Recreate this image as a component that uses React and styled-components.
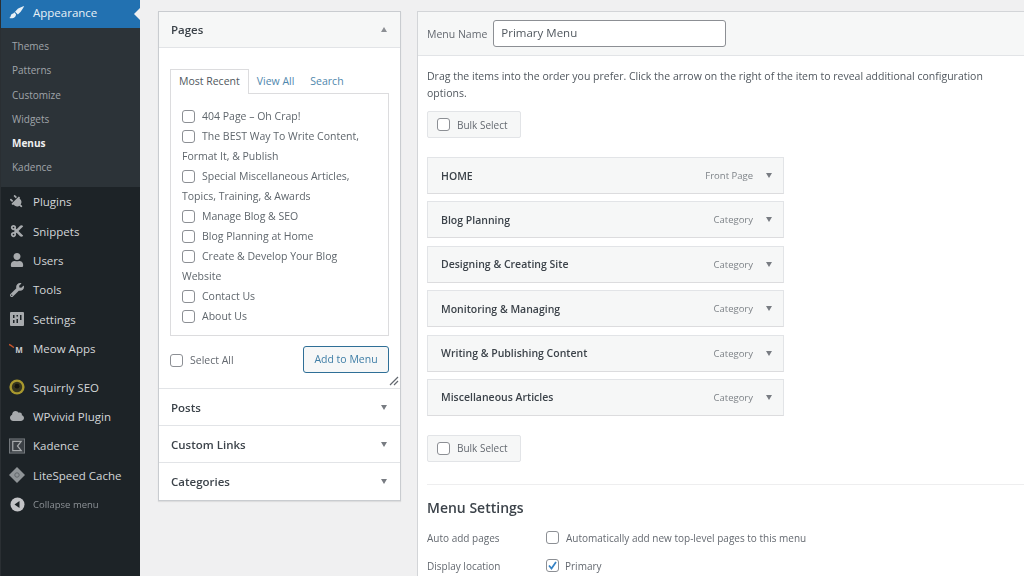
import React from "react";
import styled, { createGlobalStyle } from "styled-components";
import { FaCut, FaPlug, FaUser, FaWrench, FaCloud } from "react-icons/fa";

const GlobalStyle = createGlobalStyle`
  html, body {
    margin: 0;
    height: 576px;
    overflow: hidden;
    background: #f0f0f1;
  }
  * {
    box-sizing: border-box;
  }
  body {
    font-family: "Open Sans", "Noto Sans", sans-serif;
    font-size: 10.5px;
    color: #50575e;
  }
`;

const Page = styled.div`
  display: flex;
  width: 1024px;
  height: 576px;
  overflow: hidden;
  filter: blur(0.35px);
`;

const Sidebar = styled.nav`
  width: 140px;
  flex-shrink: 0;
  background: #1d2327;
  border-left: 1px solid #2a2f33;
`;

const ActiveItem = styled.div`
  position: relative;
  display: flex;
  align-items: center;
  height: 28px;
  padding: 0 0 3px 8px;
  gap: 8px;
  background: #2271b1;
  color: #e8f0f6;
  font-size: 11.5px;
  &::after {
    content: "";
    position: absolute;
    right: 0;
    top: 8px;
    border: 6px solid transparent;
    border-right-color: #f0f0f1;
    border-left-width: 0;
  }
`;

const SubMenu = styled.div`
  height: 159px;
  padding-top: 6px;
  background: #2c3338;
`;

const SubItem = styled.div`
  height: 24.3px;
  line-height: 24.3px;
  padding-left: 11px;
  font-size: 10px;
  color: ${props => (props.$current ? "#f0f0f1" : "#a0a5aa")};
  font-weight: ${props => (props.$current ? 700 : 400)};
`;

const MainItems = styled.div`
  padding-top: 0;
`;

const MainItem = styled.div`
  display: flex;
  align-items: center;
  gap: 8px;
  height: 29.4px;
  margin-top: ${props => props.$gap || 0}px;
  padding-left: 8px;
  color: #d3d6d9;
  font-size: 11.5px;
`;

const CollapseItem = styled(MainItem)`
  color: #8c9196;
  font-size: 9.5px;
`;

const IconSlot = styled.span`
  display: flex;
  align-items: center;
  justify-content: center;
  width: 16px;
  height: 16px;
  flex-shrink: 0;
  color: #a7aaad;
  font-size: 14px;
`;

const Content = styled.main`
  display: flex;
  align-items: flex-start;
  flex: 1;
  gap: 16px;
  padding: 11px 0 0 18px;
  min-width: 0;
`;

const Accordion = styled.section`
  width: 243px;
  flex-shrink: 0;
  background: #fff;
  border: 1px solid #c9ccd0;
  box-shadow: 0 1px 1px rgba(0, 0, 0, 0.08);
`;

const AccordionHead = styled.div`
  display: flex;
  align-items: center;
  justify-content: space-between;
  height: ${props => (props.$open ? 36 : 37)}px;
  padding: 0 13px 0 12px;
  background: ${props => (props.$open ? "#f6f7f7" : "#fff")};
  border-bottom: 1px solid #e2e4e7;
  color: #3c434a;
  font-size: 11.5px;
  font-weight: 600;
  &:last-child {
    border-bottom: 0;
  }
`;

const Arrow = styled.span`
  width: 0;
  height: 0;
  border-left: 3.5px solid transparent;
  border-right: 3.5px solid transparent;
  ${props =>
    props.$up
      ? "border-bottom: 5px solid #8c8f94;"
      : "border-top: 5px solid #787c82;"}
`;

const AccordionBody = styled.div`
  position: relative;
  height: 341px;
  padding: 21px 11px 0 11px;
  border-bottom: 1px solid #e2e4e7;
`;

const Tabs = styled.div`
  display: flex;
  align-items: flex-end;
  height: 24px;
`;

const Tab = styled.span`
  height: ${props => (props.$active ? 25 : 22)}px;
  line-height: ${props => (props.$active ? 22 : 20)}px;
  padding: ${props => (props.$active ? "0 8px" : "0 8px")};
  margin-right: ${props => (props.$active ? 0 : 0)}px;
  font-size: 10.5px;
  color: ${props => (props.$active ? "#50575e" : "#4f87ad")};
  background: #fff;
  position: relative;
  z-index: 1;
  ${props =>
    props.$active &&
    "border: 1px solid #dcdcde; border-bottom: 0; margin-bottom: -1px;"}
`;

const PageList = styled.div`
  height: 243px;
  padding: 12px 11px;
  border: 1px solid #dcdcde;
  line-height: 20px;
  font-size: 10.5px;
`;

const PageEntry = styled.div`
  color: #5f666c;
`;

const Check = styled.span`
  display: inline-flex;
  align-items: center;
  justify-content: center;
  width: 13px;
  height: 13px;
  margin-right: ${props => props.$space || 6}px;
  vertical-align: -3px;
  background: #fff;
  border: 1px solid #8c8f94;
  border-radius: 3px;
`;

const AddRow = styled.div`
  display: flex;
  align-items: center;
  justify-content: space-between;
  margin-top: 10px;
  font-size: 10.5px;
  color: #646970;
`;

const AddButton = styled.span`
  width: 86px;
  height: 27px;
  line-height: 25px;
  text-align: center;
  color: #3f7ea6;
  background: #f6f7f7;
  border: 1px solid #2f6f97;
  border-radius: 3px;
  font-size: 10.5px;
`;

const Resize = styled.svg`
  position: absolute;
  right: 1px;
  bottom: 2px;
`;

const Editor = styled.section`
  flex: 1;
  height: 580px;
  margin-right: -10px;
  background: #fff;
  border: 1px solid #d3d5d8;
`;

const EditorHead = styled.div`
  display: flex;
  align-items: center;
  gap: 6px;
  height: 44px;
  padding-left: 9px;
  background: #f6f7f7;
  border-bottom: 1px solid #e2e4e7;
  font-size: 10.5px;
  color: #646970;
`;

const NameInput = styled.div`
  width: 233px;
  height: 27px;
  line-height: 24px;
  padding-left: 7px;
  background: #fff;
  border: 1px solid #8c8f94;
  border-radius: 3px;
  font-size: 11.5px;
  color: #50575e;
`;

const EditorBody = styled.div`
  padding: 12px 9px 0;
`;

const HelpText = styled.p`
  margin: 0;
  width: 585px;
  line-height: 17px;
  font-size: 10.5px;
  color: #50575e;
`;

const BulkBox = styled.div`
  display: flex;
  align-items: center;
  width: 94px;
  height: 27px;
  margin-top: ${props => props.$top}px;
  padding-left: 9px;
  background: #f6f7f7;
  border: 1px solid #e2e4e7;
  border-radius: 2px;
  color: #646970;
  font-size: 10px;
`;

const MenuRows = styled.div`
  display: flex;
  flex-direction: column;
  gap: 7.4px;
  width: 357px;
  margin-top: 19px;
`;

const MenuRow = styled.div`
  display: flex;
  align-items: center;
  height: 37px;
  padding: 0 11px 0 13px;
  background: #f6f7f7;
  border: 1px solid #e2e4e7;
  border-bottom-color: #dcdcde;
  color: #3c434a;
  font-size: 10.5px;
  font-weight: 600;
`;

const RowType = styled.span`
  margin-left: auto;
  margin-right: 13px;
  color: #7e8388;
  font-size: 9.5px;
  font-weight: 400;
`;

const Divider = styled.hr`
  margin: 22px 0 0;
  border: 0;
  border-top: 1px solid #eeeeef;
`;

const SettingsTitle = styled.h3`
  margin: 13px 0 7px;
  font-size: 14px;
  line-height: 19px;
  font-weight: 600;
  color: #3c434a;
`;

const SettingRow = styled.div`
  display: flex;
  align-items: center;
  height: 28px;
  font-size: 10px;
  color: #646970;
`;

const SettingLabel = styled.span`
  width: 119px;
`;

const PaintIcon = () => (
  <svg width="17" height="17" viewBox="0 0 20 20" fill="#e8f0f6">
    <path d="M19 2c-2 .6-6 2.2-8 3.4L7.500 9l3.600 3.500 3.500-3.500C16.200 7 18.200 4 19 2zM6.700 9.800l-1.400 1.400c-1.500.2-2.500 1-3 2.500-.3 1.300-.8 2.300-1.800 3.100 2.700.6 5.500.2 7.200-1.600.7-.8 1-1.500 1-2.300l.3-.3z" />
  </svg>
);

const SettingsIcon = () => (
  <svg width="14" height="14" viewBox="0 0 14 14">
    <rect width="14" height="14" rx="1" fill="#a7aaad" />
    <path d="M3 3h1.500v3H3zM3 8h1.500v3H3zM6.500 3H8v1.500H6.500zM6.500 7H8v4H6.500zM10 3h1.500v5H10z" fill="#1d2327" />
  </svg>
);

const MeowIcon = () => (
  <svg width="18" height="14" viewBox="0 0 18 14">
    <path d="M0 2c2 .5 3.500 2 5.500 3.500" stroke="#c4542c" strokeWidth="1.600" fill="none" />
    <text x="7" y="11" fontSize="9" fontWeight="700" fill="#c9ccd0" fontFamily="Open Sans">M</text>
  </svg>
);

const SquirrlyIcon = () => (
  <svg width="20" height="20" viewBox="0 0 20 20">
    <circle cx="10" cy="10" r="9.500" fill="#a8982e" />
    <circle cx="10" cy="10" r="6.500" fill="#37361f" />
    <circle cx="10" cy="9" r="3" fill="#15150f" />
  </svg>
);

const KadenceIcon = () => (
  <svg width="17" height="16" viewBox="0 0 17 16">
    <rect x=".5" y=".5" width="16" height="15" fill="#3b4045" stroke="#777c80" />
    <path d="M4 3h9l-4 5 4 5H4z" fill="none" stroke="#a7aaad" strokeWidth="1.300" />
  </svg>
);

const DiamondIcon = () => (
  <svg width="18" height="18" viewBox="0 0 18 18">
    <path d="M9 0l9 9-9 9-9-9z" fill="#8f9497" />
    <circle cx="9" cy="9" r="2.500" fill="none" stroke="#5e6367" />
  </svg>
);

const CollapseIcon = () => (
  <svg width="15" height="15" viewBox="0 0 15 15">
    <circle cx="7.500" cy="7.500" r="7" fill="#c3c4c7" />
    <path d="M9.500 4v7L4.500 7.500z" fill="#1d2327" />
  </svg>
);

const CheckedBox = () => (
  <Check>
    <svg width="11" height="11" viewBox="0 0 11 11">
      <path d="M2 5.500l2.500 3L9 2" fill="none" stroke="#3582c4" strokeWidth="1.700" />
    </svg>
  </Check>
);

const subItems = ["Themes", "Patterns", "Customize", "Widgets", "Menus", "Kadence"];

const mainItems = [
  { label: "Plugins", icon: <FaPlug style={{ transform: "rotate(-45deg)" }} /> },
  { label: "Snippets", icon: <FaCut /> },
  { label: "Users", icon: <FaUser /> },
  { label: "Tools", icon: <FaWrench /> },
  { label: "Settings", icon: <SettingsIcon /> },
  { label: "Meow Apps", icon: <MeowIcon /> },
  { label: "Squirrly SEO", icon: <SquirrlyIcon />, gap: 9 },
  { label: "WPvivid Plugin", icon: <FaCloud /> },
  { label: "Kadence", icon: <KadenceIcon /> },
  { label: "LiteSpeed Cache", icon: <DiamondIcon /> },
];

const pages = [
  ["404 Page – Oh Crap!"],
  ["The BEST Way To Write Content,", "Format It, & Publish"],
  ["Special Miscellaneous Articles,", "Topics, Training, & Awards"],
  ["Manage Blog & SEO"],
  ["Blog Planning at Home"],
  ["Create & Develop Your Blog", "Website"],
  ["Contact Us"],
  ["About Us"],
];

const menuRows = [
  ["HOME", "Front Page"],
  ["Blog Planning", "Category"],
  ["Designing & Creating Site", "Category"],
  ["Monitoring & Managing", "Category"],
  ["Writing & Publishing Content", "Category"],
  ["Miscellaneous Articles", "Category"],
];

const App = () => (
  <Page>
    <GlobalStyle />
    <Sidebar>
      <ActiveItem>
        <IconSlot>
          <PaintIcon />
        </IconSlot>
        Appearance
      </ActiveItem>
      <SubMenu>
        {subItems.map(item => (
          <SubItem key={item} $current={item === "Menus"}>
            {item}
          </SubItem>
        ))}
      </SubMenu>
      <MainItems>
        {mainItems.map(item => (
          <MainItem key={item.label} $gap={item.gap}>
            <IconSlot>{item.icon}</IconSlot>
            {item.label}
          </MainItem>
        ))}
        <CollapseItem>
          <IconSlot>
            <CollapseIcon />
          </IconSlot>
          Collapse menu
        </CollapseItem>
      </MainItems>
    </Sidebar>
    <Content>
      <Accordion>
        <AccordionHead $open>
          Pages
          <Arrow $up />
        </AccordionHead>
        <AccordionBody>
          <Tabs>
            <Tab $active>Most Recent</Tab>
            <Tab>View All</Tab>
            <Tab>Search</Tab>
          </Tabs>
          <PageList>
            {pages.map(([first, second]) => (
              <PageEntry key={first}>
                <Check $space={7} />
                {first}
                {second && <br />}
                {second}
              </PageEntry>
            ))}
          </PageList>
          <AddRow>
            <span>
              <Check $space={7} />
              Select All
            </span>
            <AddButton>Add to Menu</AddButton>
          </AddRow>
          <Resize width="10" height="10" viewBox="0 0 10 10">
            <path d="M1 9l8-8M5 9l4-4" stroke="#646970" strokeWidth="1.200" />
          </Resize>
        </AccordionBody>
        <AccordionHead>
          Posts
          <Arrow />
        </AccordionHead>
        <AccordionHead>
          Custom Links
          <Arrow />
        </AccordionHead>
        <AccordionHead>
          Categories
          <Arrow />
        </AccordionHead>
      </Accordion>
      <Editor>
        <EditorHead>
          Menu Name
          <NameInput>Primary Menu</NameInput>
        </EditorHead>
        <EditorBody>
          <HelpText>
            Drag the items into the order you prefer. Click the arrow on the
            right of the item to reveal additional configuration options.
          </HelpText>
          <BulkBox $top={9}>
            <Check $space={7} />
            Bulk Select
          </BulkBox>
          <MenuRows>
            {menuRows.map(([title, type]) => (
              <MenuRow key={title}>
                {title}
                <RowType>{type}</RowType>
                <Arrow />
              </MenuRow>
            ))}
          </MenuRows>
          <BulkBox $top={19}>
            <Check $space={7} />
            Bulk Select
          </BulkBox>
          <Divider />
          <SettingsTitle>Menu Settings</SettingsTitle>
          <SettingRow>
            <SettingLabel>Auto add pages</SettingLabel>
            <Check $space={7} />
            Automatically add new top-level pages to this menu
          </SettingRow>
          <SettingRow>
            <SettingLabel>Display location</SettingLabel>
            <CheckedBox />
            Primary
          </SettingRow>
        </EditorBody>
      </Editor>
    </Content>
  </Page>
);

export default App;
